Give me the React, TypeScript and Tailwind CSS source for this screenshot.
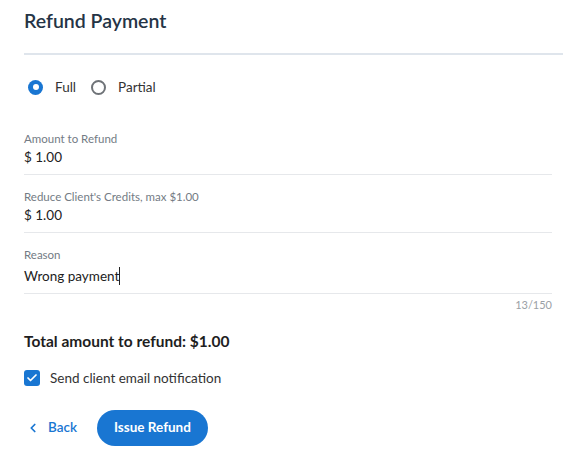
import { Check, ChevronLeft } from "lucide-react";

function Field({ label, value }: { label: string; value: string }) {
  return (
    <div className="border-b border-[#e6e8eb] pb-[7px] pt-[14px]">
      <div className="text-[11.5px] leading-[16px] text-[#737b84]">{label}</div>
      <div className="flex items-center text-[13.5px] leading-[20px] text-[#222]">{value}</div>
    </div>
  );
}

export default function App() {
  return (
    <div className="h-[459px] w-[573px] bg-white font-['Lato',sans-serif]">
      <div className="pl-[24px] pr-[10px]">
        <h1 className="pt-[9px] text-[19.5px] font-semibold leading-[24px] text-[#253446]">Refund Payment</h1>
        <div className="mt-[20px] h-[2px] bg-[#dfe5ec]" />

        <div className="mt-[22px] flex items-center gap-[15px] pl-[4px] text-[13.5px] text-[#333]">
          <label className="flex items-center gap-[12px]">
            <span className="flex h-[15px] w-[15px] items-center justify-center rounded-full bg-[#1976d2]">
              <span className="h-[6px] w-[6px] rounded-full bg-white" />
            </span>
            Full
          </label>
          <label className="flex items-center gap-[12px]">
            <span className="h-[15px] w-[15px] rounded-full border-2 border-[#6f7378]" />
            Partial
          </label>
        </div>

        <div className="mr-[11px] mt-[20px]">
          <Field label="Amount to Refund" value="$ 1.00" />
          <Field label="Reduce Client's Credits, max $1.00" value="$ 1.00" />
          <div className="border-b border-[#e6e8eb] pb-[7px] pt-[14px]">
            <div className="text-[11.5px] leading-[16px] text-[#737b84]">Reason</div>
            <div className="mt-[3px] flex items-center text-[13.5px] leading-[20px] text-[#222]">
              Wrong payment
              <span className="inline-block h-[18px] w-px bg-[#222]" />
            </div>
          </div>
          <div className="mt-[3px] text-right text-[11px] leading-[16px] text-[#9aa0a6]">13/150</div>
        </div>

        <div className="mt-[18px] text-[15.5px] font-bold leading-[20px] text-[#1e1e1e]">Total amount to refund: $1.00</div>

        <label className="mt-[17px] flex items-center gap-[10px] text-[13.5px] text-[#333]">
          <span className="flex h-[16px] w-[16px] items-center justify-center rounded-[3px] bg-[#1976d2]">
            <Check className="h-[12px] w-[12px] text-white" strokeWidth={3.5} />
          </span>
          Send client email notification
        </label>

        <div className="mt-[21px] flex items-center gap-[20px] pl-[2px]">
          <button className="flex items-center gap-[8px] text-[13.5px] font-semibold text-[#1976d2]">
            <ChevronLeft className="h-[14px] w-[14px]" strokeWidth={3} />
            Back
          </button>
          <button className="h-[36px] rounded-full bg-[#1976d2] px-[17px] text-[13.5px] font-bold text-white">
            Issue Refund
          </button>
        </div>
      </div>
    </div>
  );
}
